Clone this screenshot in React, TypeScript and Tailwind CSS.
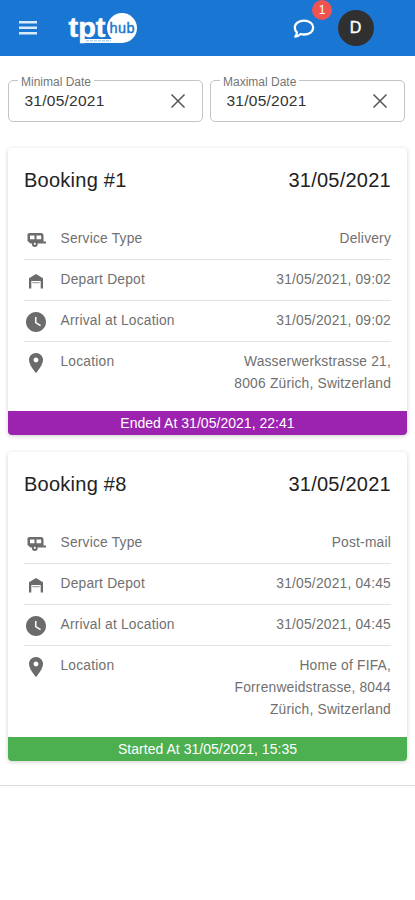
import { MdPlace, MdWatchLater } from "react-icons/md";

type Booking = {
    id: number;
    date: string;
    service: string;
    time: string;
    address: string[];
    status: string;
    statusClass: string;
};

const bookings: Booking[] = [
    {
        id: 1,
        date: "31/05/2021",
        service: "Delivery",
        time: "31/05/2021, 09:02",
        address: ["Wasserwerkstrasse 21,", "8006 Zürich, Switzerland"],
        status: "Ended At 31/05/2021, 22:41",
        statusClass: "bg-[#9c22b0]",
    },
    {
        id: 8,
        date: "31/05/2021",
        service: "Post-mail",
        time: "31/05/2021, 04:45",
        address: ["Home of FIFA,", "Forrenweidstrasse, 8044", "Zürich, Switzerland"],
        status: "Started At 31/05/2021, 15:35",
        statusClass: "bg-[#4caf50]",
    },
];

const Menu = () => (
    <svg width="18" height="14" viewBox="0 0 18 14" fill="#dce9f8">
        <path d="M0 0h18v2.600H0zM0 5.500h18v2.600H0zM0 11h18v2.600H0z" />
    </svg>
);

const Logo = () => (
    <svg width="72" height="34" viewBox="0 0 72 34" className="ml-[31px]" fontFamily="'Liberation Sans', Arial, sans-serif" fontWeight="700">
        <path d="M12.500 28h42v4h-42z" fill="#fff" />
        <circle cx="54" cy="17" r="15" fill="#fff" />
        <path d="M18 29.800h25" stroke="#1976d2" strokeWidth="1" strokeDasharray="3 1" opacity="0.45" />
        <text x="0.500" y="26" fontSize="28" fill="#fff" stroke="#fff" strokeWidth="0.5" textLength="37" lengthAdjust="spacingAndGlyphs">tpt</text>
        <text x="41.500" y="22" fontSize="14.500" fontWeight="400" fill="#1976d2" stroke="#1976d2" strokeWidth="0.4" textLength="25">hub</text>
    </svg>
);

const Camper = () => (
    <svg width="19" height="14" viewBox="0 0 19 14" fill="#6b6b6b">
        <path fillRule="evenodd" d="M2.500 0H14a2.500 2.500 0 0 1 2.500 2.500V8.500H19v2h-8.600a2.700 2.700 0 0 1-5.200 0H3.500L.500 8V2.500a2 2 0 0 1 2-2.500zM3 2.500v3.700h4.500V2.500zM9.500 2.500v3.700h4.700V2.500z" />
        <circle cx="7.800" cy="11" r="2.900" />
        <circle cx="7.800" cy="10.800" r="1.100" fill="#fff" />
    </svg>
);

const Garage = () => (
    <svg width="16" height="16" viewBox="0 0 16 16" fill="#6b6b6b">
        <path d="M1 15.500V5.200L8 1l7 4.200v10.300h-2.300V8H3.300v7.500z" />
        <path d="M4.300 9h7.400v1.300H4.300z" opacity="0.6" />
    </svg>
);

const Header = () => (
    <header className="flex h-14 items-center bg-[#1976d2] pl-[19px] pr-[41.500px] text-white">
        <Menu />
        <Logo />
        <div className="relative ml-auto mr-[23px] mt-[2px]">
            <svg width="22" height="20" viewBox="0 0 22 20" fill="none" stroke="#fff" strokeWidth="2.300" strokeLinejoin="round">
                <path d="M11 1.700c5.200 0 9.200 2.900 9.200 6.900s-4 6.900-9.200 6.900c-1.200 0-2.300-.2-3.300-.5-1.500 1.400-3.200 2.400-5.400 2.700 1-1.200 1.600-2.700 1.600-4.300-1.400-1.300-2.100-2.900-2.100-4.800 0-4 4-6.900 9.200-6.900z" />
            </svg>
            <span className="absolute -top-[19px] left-[19.500px] flex h-5 w-5 items-center justify-center rounded-full bg-[#ef5350] text-[12px]">1</span>
        </div>
        <div className="flex h-9 w-9 items-center justify-center rounded-full bg-[#303030] text-base [-webkit-text-stroke:0.4px_white]">D</div>
    </header>
);

const DateField = ({ label, value }: { label: string; value: string }) => (
    <div className="relative flex h-[42px] flex-1 items-center justify-between rounded-[5px] border border-[#c4c4c4] pl-[15.500px] pr-4">
        <span className="absolute -top-[6px] left-[9px] bg-white px-[3px] text-[12px] leading-[14px] text-[#757575]">{label}</span>
        <span className="text-[15.500px] tracking-[0.250px] text-[#333]">{value}</span>
        <svg width="16" height="16" viewBox="0 0 16 16" stroke="#555" strokeWidth="1.500">
            <path d="M1.500 1.500l13 13M14.500 1.500l-13 13" />
        </svg>
    </div>
);

const Row = ({ icon, label, children, last }: { icon: React.ReactNode; label: string; children: React.ReactNode; last?: boolean }) => (
    <div className={last ? "flex pt-[9px] pb-[15.500px]" : "flex h-[41.250px] border-b border-[#e3e3e3] pt-[9px]"}>
        <div className="mt-px flex h-[22px] w-6 items-center justify-center text-[#6b6b6b]">{icon}</div>
        <div className="ml-[12.500px]">{label}</div>
        <div className="ml-auto text-right">{children}</div>
    </div>
);

const BookingCard = ({ booking }: { booking: Booking }) => (
    <section className="overflow-hidden rounded-[4px] bg-white shadow-[0_1px_4px_rgba(0,0,0,0.200)]">
        <div className="flex h-[70.500px] items-start justify-between px-4 pt-[18px] text-[20px] leading-7 tracking-[0.25px] text-[#222]">
            <h2>Booking #{booking.id}</h2>
            <span>{booking.date}</span>
        </div>
        <div className="px-4 text-[13.800px] leading-[22px] tracking-[0.2px] text-[#707070]">
            <Row icon={<Camper />} label="Service Type">{booking.service}</Row>
            <Row icon={<Garage />} label="Depart Depot">{booking.time}</Row>
            <Row icon={<MdWatchLater size={24} />} label="Arrival at Location">{booking.time}</Row>
            <Row icon={<MdPlace size={24} />} label="Location" last>
                {booking.address.map((line) => (
                    <div key={line}>{line}</div>
                ))}
            </Row>
        </div>
        <div className={`h-[24.500px] text-center text-[14px] leading-[24px] tracking-[0.03px] text-white ${booking.statusClass}`}>{booking.status}</div>
    </section>
);

export default function App() {
    return (
        <div className="h-[900px] overflow-hidden bg-white font-['Liberation_Sans',Arial,sans-serif]">
            <Header />
            <main className="h-[730px] border-b border-[#dcdcdc] px-2 pt-6">
                <div className="flex gap-[7.500px] pr-[2.500px]">
                    <DateField label="Minimal Date" value="31/05/2021" />
                    <DateField label="Maximal Date" value="31/05/2021" />
                </div>
                <div className="mt-[26px] flex flex-col gap-[16.750px]">
                    {bookings.map((booking) => (
                        <BookingCard key={booking.id} booking={booking} />
                    ))}
                </div>
            </main>
        </div>
    );
}
